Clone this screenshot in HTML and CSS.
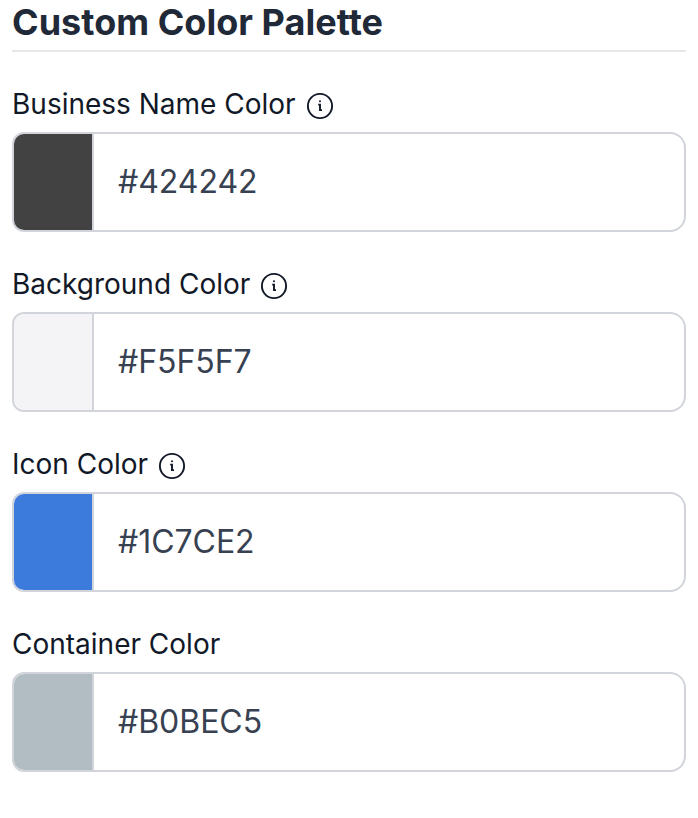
FILE: index.html
```html
<!DOCTYPE html>
<html lang="en">
<head>
<meta charset="utf-8">
<title>Custom Color Palette</title>
<link rel="stylesheet" href="styles.css">
</head>
<body>
<main class="panel">
  <h2 class="title">Custom Color Palette</h2>
  <section class="field">
    <div class="label"><span>Business Name Color</span><svg class="info" viewBox="0 0 28 28"><circle cx="14" cy="14" r="12.1"/><path d="M12.2 12.6h1.8v5.5h2"/><circle class="dot" cx="14" cy="9.3" r="1"/></svg></div>
    <div class="input"><span class="swatch name"></span><span class="value">#424242</span></div>
  </section>
  <section class="field">
    <div class="label"><span>Background Color</span><svg class="info" viewBox="0 0 28 28"><circle cx="14" cy="14" r="12.1"/><path d="M12.2 12.6h1.8v5.5h2"/><circle class="dot" cx="14" cy="9.3" r="1"/></svg></div>
    <div class="input"><span class="swatch background"></span><span class="value">#F5F5F7</span></div>
  </section>
  <section class="field">
    <div class="label"><span>Icon Color</span><svg class="info" viewBox="0 0 28 28"><circle cx="14" cy="14" r="12.1"/><path d="M12.2 12.6h1.8v5.5h2"/><circle class="dot" cx="14" cy="9.3" r="1"/></svg></div>
    <div class="input"><span class="swatch icon"></span><span class="value">#1C7CE2</span></div>
  </section>
  <section class="field">
    <div class="label"><span>Container Color</span></div>
    <div class="input"><span class="swatch container"></span><span class="value">#B0BEC5</span></div>
  </section>
</main>
</body>
</html>
```
FILE: styles.css
```css
* { box-sizing: border-box; }
body { margin: 0; background: #fff; font-family: Inter, sans-serif; }
.panel { padding: 0 12px; }
.title { margin: 0 0 32px; height: 52px; border-bottom: 2px solid #e5e7eb; font-size: 36px; line-height: 44px; font-weight: 700; letter-spacing: 0.03px; color: #1f2937; }
.field { height: 180px; }
.label { display: flex; align-items: center; height: 48px; padding-bottom: 8px; font-size: 28px; line-height: 40px; color: #111827; }
.info { width: 28px; height: 28px; margin: 4px 0 0 10px; fill: none; stroke: #111827; stroke-width: 1.9; }
.info .dot { fill: #111827; stroke: none; }
.input { display: flex; align-items: stretch; height: 100px; border: 2px solid #d1d5db; border-radius: 12px 16px 16px 12px; overflow: hidden; }
.swatch { width: 80px; border-right: 2px solid #d1d5db; }
.name { background: #424242; }
.background { background: #f4f4f7; }
.icon { background: #3c7bdb; }
.container { background: #b2bdc3; }
.value { padding-left: 24px; font-size: 32px; line-height: 95px; letter-spacing: -0.05px; color: #374151; }
```
